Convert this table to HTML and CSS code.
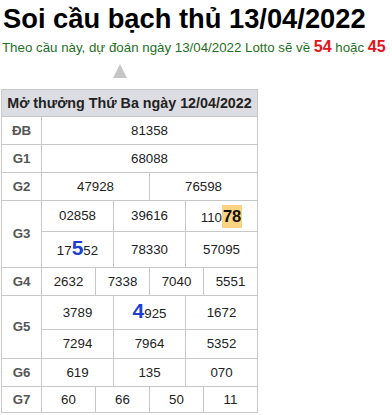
FILE: index.html
```html
<!DOCTYPE html>
<html lang="vi">
<head>
<meta charset="utf-8">
<title>Soi cầu bạch thủ 13/04/2022</title>
<link rel="stylesheet" href="styles.css">
</head>
<body>
<h1 class="title">Soi cầu bạch thủ 13/04/2022</h1>
<p class="predict">Theo cầu này, dự đoán ngày 13/04/2022 Lotto sẽ về <b class="hot">54</b> hoặc <b class="hot">45</b></p>
<div class="arrow-row"><span class="arrow"></span></div>
<table class="kq">
  <colgroup><col class="c-lb"><col span="12" class="c-n"></colgroup>
  <tr><th class="head" colspan="13">Mở thưởng Thứ Ba ngày 12/04/2022</th></tr>
  <tr class="r"><td class="lb">ĐB</td><td colspan="12">81358</td></tr>
  <tr class="r"><td class="lb">G1</td><td colspan="12">68088</td></tr>
  <tr class="r"><td class="lb">G2</td><td colspan="6">47928</td><td colspan="6">76598</td></tr>
  <tr class="g3a"><td class="lb" rowspan="2">G3</td><td colspan="4">02858</td><td colspan="4">39616</td><td colspan="4">110<span class="mark">78</span></td></tr>
  <tr class="g3b"><td colspan="4">17<span class="big">5</span>52</td><td colspan="4">78330</td><td colspan="4">57095</td></tr>
  <tr class="r"><td class="lb">G4</td><td colspan="3">2632</td><td colspan="3">7338</td><td colspan="3">7040</td><td colspan="3">5551</td></tr>
  <tr class="g5a"><td class="lb" rowspan="2">G5</td><td colspan="4">3789</td><td colspan="4"><span class="big">4</span>925</td><td colspan="4">1672</td></tr>
  <tr class="g5b"><td colspan="4">7294</td><td colspan="4">7964</td><td colspan="4">5352</td></tr>
  <tr class="r"><td class="lb">G6</td><td colspan="4">619</td><td colspan="4">135</td><td colspan="4">070</td></tr>
  <tr class="g7"><td class="lb">G7</td><td colspan="3">60</td><td colspan="3">66</td><td colspan="3">50</td><td colspan="3">11</td></tr>
</table>
</body>
</html>
```

FILE: styles.css
```css
html, body {
  margin: 0;
  padding: 0;
  background: #fff;
  font-family: "Liberation Sans", Arial, sans-serif;
}

.title {
  margin: 0;
  padding: 4px 0 0 3px;
  font-size: 27.3px;
  line-height: 30px;
  font-weight: bold;
  color: #000;
}

.predict {
  margin: 4px 0 0 2px;
  font-size: 13.3px;
  line-height: 18px;
  color: #1f6f1f;
  white-space: nowrap;
}

.predict .hot {
  color: #e3141b;
  font-size: 16px;
}

.arrow-row {
  display: flex;
  justify-content: center;
  width: 240px;
  height: 32px;
  padding-top: 7px;
  box-sizing: border-box;
}

.arrow {
  width: 0;
  height: 0;
  border-left: 7px solid transparent;
  border-right: 7px solid transparent;
  border-bottom: 14px solid #c6c6c6;
}

.kq {
  margin-left: 1px;
  width: 257px;
  border-collapse: collapse;
  table-layout: fixed;
  font-size: 13.3px;
  color: #222;
}

.kq .c-lb { width: 40px; }

.kq th, .kq td {
  border: 1px solid #c8c8c8;
  text-align: center;
  vertical-align: middle;
  padding: 0;
  line-height: 16px;
}

.kq .head {
  background: #dcdde2;
  font-size: 14.3px;
  font-weight: bold;
  color: #222;
  height: 26px;
}

.kq .lb {
  font-weight: bold;
  color: #555;
  font-size: 13.3px;
}

.kq tr.r td { height: 27px; }
.kq tr.g3a td { height: 30px; }
.kq tr.g3b td { height: 35px; }
.kq tr.g5a td { height: 33px; }
.kq tr.g5b td { height: 28px; }
.kq tr.g7 td { height: 25px; }

.mark {
  display: inline-block;
  background: #fbd483;
  font-weight: bold;
  font-size: 16.5px;
  line-height: 23px;
  padding: 0 1px;
  color: #111;
}

.big {
  font-weight: bold;
  font-size: 21px;
  color: #1d3fd0;
}
```
